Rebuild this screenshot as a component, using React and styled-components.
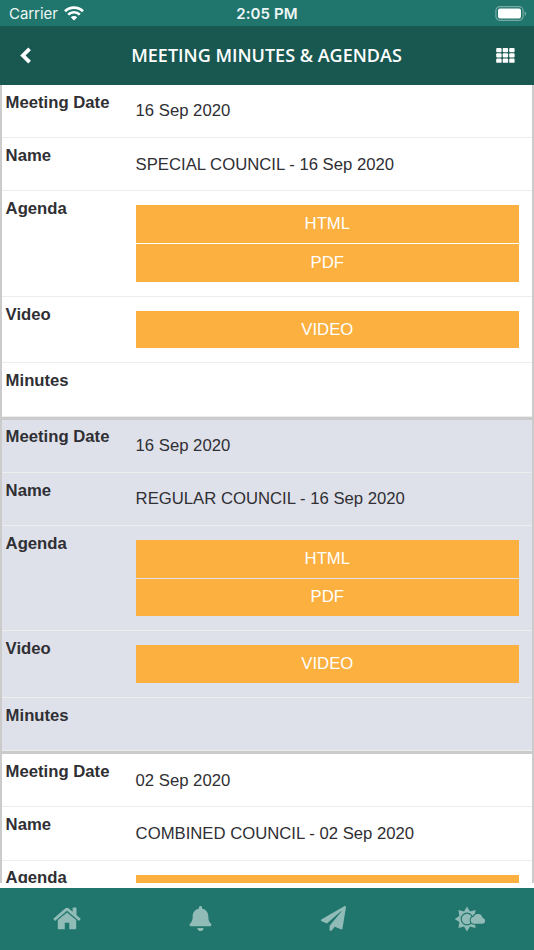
import React from 'react';
import styled, { createGlobalStyle } from 'styled-components';
import { FaBell, FaPaperPlane } from 'react-icons/fa';

const GlobalStyle = createGlobalStyle`
  * {
    box-sizing: border-box;
  }

  body {
    margin: 0;
    overflow: hidden;
  }
`;

const Screen = styled.div`
  display: flex;
  flex-direction: column;
  width: 534px;
  height: 950px;
  background-color: white;
  font-family: 'Liberation Sans', Arial, sans-serif;
  color: #2f2f34;
`;

const StatusBar = styled.div`
  display: grid;
  grid-template-columns: 1fr auto 1fr;
  align-items: center;
  flex: none;
  height: 26px;
  padding: 1px 7px 0 9px;
  background-color: #20766d;
  color: #eef6f5;
  font-family: Inter, 'Liberation Sans', sans-serif;
  font-size: 15px;
`;

const Carrier = styled.div`
  display: flex;
  align-items: center;
  gap: 6px;
  letter-spacing: -0.05px;
`;

const Time = styled.div`
  font-weight: 600;
  letter-spacing: 0.1px;
  margin-right: 2px;
`;

const Battery = styled.svg`
  justify-self: end;
  margin-top: -1px;
`;

const Header = styled.header`
  display: flex;
  align-items: center;
  justify-content: space-between;
  flex: none;
  height: 59px;
  padding: 0 19px 0 17px;
  background-color: #195851;
  color: white;
`;

const Title = styled.h1`
  margin: 0;
  padding: 0 0 2px 3px;
  font-family: 'Open Sans', sans-serif;
  font-size: 18px;
  font-weight: 600;
  white-space: nowrap;
`;

const Content = styled.main`
  flex: none;
  height: 798px;
  overflow: hidden;
`;

const Record = styled.section`
  height: 334.6px;
  border: solid #cbcbcb;
  border-width: 0 2px 3px;
  background-color: ${(props) => (props.$shaded ? '#dfe1ea' : 'white')};
`;

const Row = styled.div`
  display: grid;
  grid-template-columns: 130px 1fr;
  height: ${(props) => props.$height}px;
  padding: 0 13px 0 3.6px;
  border-bottom: 1px solid #ededed;
`;

const Label = styled.div`
  padding-top: 7.8px;
  font-size: 16.7px;
  font-weight: bold;
  line-height: 19px;
`;

const Value = styled.div`
  padding-top: 16.4px;
  font-size: 16.7px;
  line-height: 20px;
  white-space: nowrap;
`;

const Links = styled.div`
  display: flex;
  flex-direction: column;
  gap: 1px;
  padding-top: 14px;
`;

const LinkButton = styled.button`
  height: 37.6px;
  padding: 0;
  border: 0;
  background-color: #fbb040;
  color: white;
  font-family: inherit;
  font-size: 16.7px;
  line-height: 36px;
`;

const TabBar = styled.nav`
  display: grid;
  grid-template-columns: repeat(4, 1fr);
  flex: none;
  height: 62px;
  margin-top: auto;
  padding-bottom: 1px;
  background-color: #20766d;
  color: #90bbb6;
`;

const Tab = styled.div`
  display: flex;
  align-items: center;
  justify-content: center;
`;

const meetings = [
  { id: 1, date: '16 Sep 2020', name: 'SPECIAL COUNCIL - 16 Sep 2020' },
  { id: 2, date: '16 Sep 2020', name: 'REGULAR COUNCIL - 16 Sep 2020' },
  { id: 3, date: '02 Sep 2020', name: 'COMBINED COUNCIL - 02 Sep 2020' },
];

const WifiIcon = () => (
  <svg width="20" height="15" viewBox="0 0 20 15" fill="none" stroke="white" strokeWidth="2.7">
    <path d="M1 5.2a13 13 0 0 1 18 0" />
    <path d="M4.2 8.6a8.3 8.3 0 0 1 11.6 0" />
    <path d="M10 14.5 6.8 11.3a4.6 4.6 0 0 1 6.4 0Z" fill="white" stroke="none" />
  </svg>
);

const BatteryIcon = () => (
  <Battery width="32" height="15" viewBox="0 0 32 15">
    <rect x="0.9" y="0.7" width="27.2" height="13.6" rx="4" fill="none" stroke="#79aaa5" strokeWidth="1.2" />
    <rect x="3" y="2.6" width="23" height="9.8" rx="2" fill="white" />
    <path d="M29.7 5.2c2 .8 2 3.8 0 4.6Z" fill="#79aaa5" />
  </Battery>
);

const BackIcon = () => (
  <svg width="17" height="20" viewBox="0 0 17 20" fill="none" stroke="white" strokeWidth="3.8">
    <path d="M12.6 2.8 5.9 9.5l6.7 6.7" />
  </svg>
);

const GridIcon = () => (
  <svg width="19" height="15" viewBox="0 0 19 15" fill="white">
    {[0, 5.3, 10.6].map((y) =>
      [0.2, 6.7, 13.2].map((x) => <rect key={`${x}-${y}`} x={x} y={y} width="5.4" height="4.2" rx="0.9" />)
    )}
  </svg>
);

const HomeIcon = () => (
  <svg width="28" height="23" viewBox="0 0 28 23" fill="currentColor">
    <path d="M14 5.6 23.2 13v8.2c0 .7-.4 1.1-1.1 1.1h-5.8v-6.6h-4.5v6.6H5.9c-.7 0-1.1-.4-1.1-1.1V13Z" />
    <path d="M.6 11.4 12.4 1.3c1-.8 2.2-.8 3.2 0l4 3.4V1.2c0-.4.2-.6.6-.6h2.7c.4 0 .6.2.6.6v6.7l3.9 3.5c.3.3.3.5.1.8l-1.1 1.2c-.3.3-.6.3-.9 0L14 3.7 2.6 13.4c-.3.3-.6.3-.9 0L.6 12.2c-.3-.3-.3-.5 0-.8Z" />
  </svg>
);

// Sun with eight rays, a ring cut out of it and a small cloud in front
const WeatherIcon = () => (
  <svg width="32" height="26" viewBox="0 0 32 26">
    <path
      fill="currentColor"
      d="M13 .4 15.9 5.4 21.6 4.1 20.6 9.7 25.6 13 20.6 16.2 21.6 21.9 15.9 20.6 13 25.6 10.1 20.6 4.4 21.9 5.4 16 .7 13 5.4 10 4.4 4.1 10.1 5.4Z"
    />
    <circle cx="13" cy="13" r="5.8" fill="currentColor" stroke="#20766d" strokeWidth="1.2" />
    <path
      fill="currentColor"
      stroke="#20766d"
      strokeWidth="2"
      paintOrder="stroke"
      d="M20.2 17.8a3.6 3.6 0 0 1-.7-7.1 4.8 4.8 0 0 1 9 1 3.1 3.1 0 0 1 .2 6.1Z"
    />
  </svg>
);

const WeatherTab = styled(Tab)`
  padding-left: 5px;
`;

const Meeting = ({ meeting, shaded }) => (
  <Record $shaded={shaded}>
    <Row $height={53.2}>
      <Label>Meeting Date</Label>
      <Value>{meeting.date}</Value>
    </Row>
    <Row $height={53.3}>
      <Label>Name</Label>
      <Value>{meeting.name}</Value>
    </Row>
    <Row $height={105.3}>
      <Label>Agenda</Label>
      <Links>
        <LinkButton>HTML</LinkButton>
        <LinkButton>PDF</LinkButton>
      </Links>
    </Row>
    <Row $height={66.7}>
      <Label>Video</Label>
      <Links>
        <LinkButton>VIDEO</LinkButton>
      </Links>
    </Row>
    <Row $height={53.1}>
      <Label>Minutes</Label>
    </Row>
  </Record>
);

const App = () => {
  return (
    <Screen>
      <GlobalStyle />
      <StatusBar>
        <Carrier>
          Carrier
          <WifiIcon />
        </Carrier>
        <Time>2:05 PM</Time>
        <BatteryIcon />
      </StatusBar>
      <Header>
        <BackIcon />
        <Title>MEETING MINUTES &amp; AGENDAS</Title>
        <GridIcon />
      </Header>
      <Content>
        {meetings.map((meeting, index) => (
          <Meeting key={meeting.id} meeting={meeting} shaded={index % 2 === 1} />
        ))}
      </Content>
      <TabBar>
        <Tab><HomeIcon /></Tab>
        <Tab><FaBell size={25} /></Tab>
        <Tab><FaPaperPlane size={25} /></Tab>
        <WeatherTab><WeatherIcon /></WeatherTab>
      </TabBar>
    </Screen>
  );
};

export default App;
